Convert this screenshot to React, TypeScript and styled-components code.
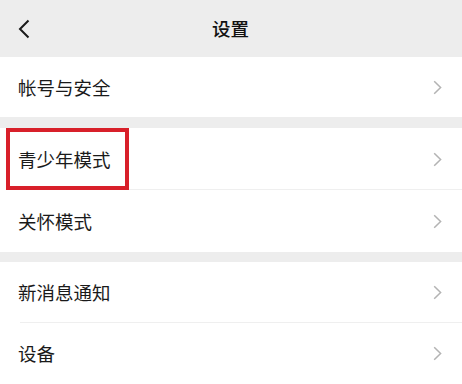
import React from 'react'
import styled, { createGlobalStyle } from 'styled-components'

const GlobalStyle = createGlobalStyle`
  html, body {
    margin: 0;
    padding: 0;
    background: #ededed;
  }
  body {
    font-family: "Noto Sans CJK SC", "Noto Sans", sans-serif;
    color: #191919;
  }
`

const Page = styled.div`
  width: 462px;
  height: 384px;
  overflow: hidden;
  background: #ededed;
  display: flex;
  flex-direction: column;
`

const NavBar = styled.div`
  height: 57px;
  flex-shrink: 0;
  display: grid;
  grid-template-columns: 60px 1fr 60px;
  align-items: center;
  background: #ededed;
`

const BackButton = styled.div`
  padding-left: 18px;
  display: flex;
  align-items: center;
  height: 100%;
`

const Title = styled.div`
  text-align: center;
  font-size: 18.5px;
  font-weight: 500;
  line-height: 1;
  color: #111;
  margin-left: -1px;
`

const Group = styled.div<{ $gap: number }>`
  background: #fff;
  display: flex;
  flex-direction: column;
  margin-bottom: ${p => p.$gap}px;
`

const Row = styled.div<{ $height: number; $divider?: boolean; $highlight?: boolean }>`
  height: ${p => p.$height}px;
  flex-shrink: 0;
  display: flex;
  align-items: center;
  justify-content: space-between;
  padding: 0 20px 0 18px;
  position: relative;

  ${p => p.$divider && `
    &::after {
      content: '';
      position: absolute;
      left: 20px;
      right: 0;
      bottom: 0;
      height: 1px;
      background: #efefef;
    }
  `}

  ${p => p.$highlight && `
    &::before {
      content: '';
      position: absolute;
      left: 6px;
      top: 0;
      width: 115px;
      height: 54px;
      border: 4px solid #d8202a;
      z-index: 1;
    }
  `}
`

const Label = styled.span`
  font-size: 18.5px;
  line-height: 1;
  color: #1a1a1a;
`

const Arrow = () => (
  <svg width="9" height="15" viewBox="0 0 9 15">
    <path d="M1.2 1.2 L7.6 7.5 L1.2 13.8" fill="none" stroke="#b3b3b3" strokeWidth="1.5" />
  </svg>
)

const Back = () => (
  <svg width="12" height="20" viewBox="0 0 12 20">
    <path d="M10.5 1.5 L2 10 L10.5 18.5" fill="none" stroke="#1a1a1a" strokeWidth="2" />
  </svg>
)

type Item = { label: string; height: number; highlight?: boolean }

const groups: { gap: number; items: Item[] }[] = [
  { gap: 11, items: [{ label: '帐号与安全', height: 60 }] },
  {
    gap: 10,
    items: [
      { label: '青少年模式', height: 62, highlight: true },
      { label: '关怀模式', height: 62 }
    ]
  },
  {
    gap: 0,
    items: [
      { label: '新消息通知', height: 61 },
      { label: '设备', height: 61 }
    ]
  }
]

export default function App() {
  return (
    <>
      <GlobalStyle />
      <Page>
        <NavBar>
          <BackButton>
            <Back />
          </BackButton>
          <Title>设置</Title>
          <div />
        </NavBar>
        {groups.map((group, gi) => (
          <Group key={gi} $gap={group.gap}>
            {group.items.map((item, i) => (
              <Row
                key={item.label}
                $height={item.height}
                $divider={i < group.items.length - 1}
                $highlight={item.highlight}
              >
                <Label>{item.label}</Label>
                <Arrow />
              </Row>
            ))}
          </Group>
        ))}
      </Page>
    </>
  )
}
